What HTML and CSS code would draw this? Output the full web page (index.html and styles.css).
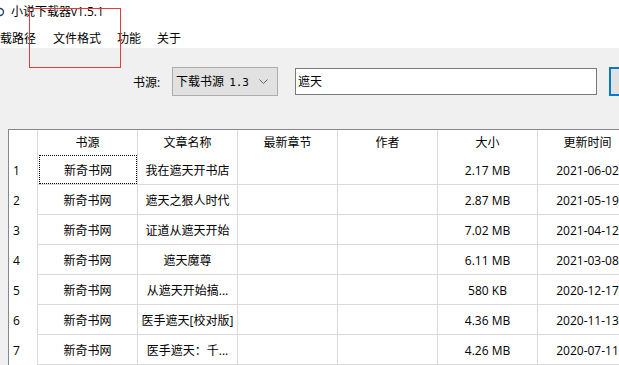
FILE: index.html
```html
<!DOCTYPE html>
<html lang="zh">
<head>
<meta charset="utf-8">
<title>小说下载器v1.5.1</title>
<link rel="stylesheet" href="styles.css">
</head>
<body>
<div class="window">
  <div class="titlebar">
    <svg class="app-icon" width="6" height="10" viewBox="0 0 6 10"><path d="M0 1.5 A3.5 3.5 0 0 1 0 8.5" fill="none" stroke="#23406e" stroke-width="1.4"/></svg>
    <span class="title">小说下载器v1.5.1</span>
  </div>
  <div class="menubar">
    <span class="menu-item first">载路径</span>
    <span class="menu-item">文件格式</span>
    <span class="menu-item">功能</span>
    <span class="menu-item">关于</span>
  </div>
  <div class="toolbar">
    <span class="label">书源:</span>
    <div class="combo">
      <span class="combo-text">下载书源 <span class="ver">1.3</span></span>
      <svg class="chev" width="9" height="5" viewBox="0 0 9 5"><path d="M0.5 0.5 L4.5 4.5 L8.5 0.5" fill="none" stroke="#606060" stroke-width="1"/></svg>
    </div>
    <div class="input">遮天</div>
    <div class="button"></div>
  </div>
  <div class="grid">
    <div class="row head">
      <div class="rh"></div>
      <div class="c">书源</div>
      <div class="c">文章名称</div>
      <div class="c">最新章节</div>
      <div class="c">作者</div>
      <div class="c">大小</div>
      <div class="c">更新时间</div>
    </div>
    <div class="row">
      <div class="rh">1</div>
      <div class="c focus-cell"><div class="focus">新奇书网</div></div>
      <div class="c">我在遮天开书店</div>
      <div class="c"></div>
      <div class="c"></div>
      <div class="c">2.17 MB</div>
      <div class="c">2021-06-02</div>
    </div>
    <div class="row">
      <div class="rh">2</div>
      <div class="c">新奇书网</div>
      <div class="c">遮天之狠人时代</div>
      <div class="c"></div>
      <div class="c"></div>
      <div class="c">2.87 MB</div>
      <div class="c">2021-05-19</div>
    </div>
    <div class="row">
      <div class="rh">3</div>
      <div class="c">新奇书网</div>
      <div class="c">证道从遮天开始</div>
      <div class="c"></div>
      <div class="c"></div>
      <div class="c">7.02 MB</div>
      <div class="c">2021-04-12</div>
    </div>
    <div class="row">
      <div class="rh">4</div>
      <div class="c">新奇书网</div>
      <div class="c">遮天魔尊</div>
      <div class="c"></div>
      <div class="c"></div>
      <div class="c">6.11 MB</div>
      <div class="c">2021-03-08</div>
    </div>
    <div class="row">
      <div class="rh">5</div>
      <div class="c">新奇书网</div>
      <div class="c">从遮天开始搞...</div>
      <div class="c"></div>
      <div class="c"></div>
      <div class="c">580 KB</div>
      <div class="c">2020-12-17</div>
    </div>
    <div class="row">
      <div class="rh">6</div>
      <div class="c">新奇书网</div>
      <div class="c">医手遮天[校对版]</div>
      <div class="c"></div>
      <div class="c"></div>
      <div class="c">4.36 MB</div>
      <div class="c">2020-11-13</div>
    </div>
    <div class="row">
      <div class="rh">7</div>
      <div class="c">新奇书网</div>
      <div class="c">医手遮天：千...</div>
      <div class="c"></div>
      <div class="c"></div>
      <div class="c">4.26 MB</div>
      <div class="c">2020-07-11</div>
    </div>
  </div>
  <div class="annot"></div>
</div>
</body>
</html>
```

FILE: styles.css
```css
* { box-sizing: border-box; }
html, body {
  margin: 0;
  padding: 0;
}
body {
  width: 619px;
  height: 365px;
  overflow: hidden;
  background: #f0f0f0;
  font-family: "Open Sans", "Noto Sans CJK SC", sans-serif;
  font-size: 12px;
  color: #000;
}
.window {
  position: relative;
  width: 619px;
  height: 365px;
  overflow: hidden;
}
.titlebar {
  height: 22px;
  background: #fff;
  display: flex;
  align-items: center;
  line-height: 16px;
  padding-top: 1px;
}
.app-icon {
  flex: none;
}
.title {
  margin-left: 5px;
}
.menubar {
  height: 26px;
  background: #fff;
  display: flex;
  align-items: flex-end;
  padding-bottom: 1px;
  line-height: 16px;
}
.menu-item {
  padding: 0 8px;
  flex: none;
}
.menu-item.first {
  padding: 0 9px 0 0;
}
.toolbar {
  height: 81px;
  display: flex;
  align-items: flex-start;
  padding-top: 19px;
  padding-left: 133px;
}
.toolbar > * {
  flex: none;
}
.label {
  width: 39px;
  height: 29px;
  line-height: 29px;
  padding-top: 1px;
}
.combo {
  width: 106px;
  height: 29px;
  background: #e1e1e1;
  border: 1px solid #adadad;
  display: flex;
  align-items: center;
  padding-left: 3px;
  line-height: 16px;
}
.combo-text {
  flex: 1;
  white-space: nowrap;
  padding-top: 1px;
}
.ver {
  font-family: "DejaVu Sans Mono", monospace;
  font-size: 11px;
  margin-left: 2px;
}
.chev {
  flex: none;
  margin-right: 9px;
}
.input {
  margin-left: 17px;
  margin-top: 1px;
  width: 302px;
  height: 27px;
  background: #fff;
  border: 1px solid #7a7a7a;
  padding-left: 2px;
  padding-top: 1px;
  line-height: 24px;
}
.button {
  margin-left: 12px;
  width: 60px;
  height: 29px;
  background: #e1e1e1;
  border: 2px solid #0078d7;
}
.grid {
  margin-left: 8px;
  width: 640px;
  height: 240px;
  background: #fff;
  border-left: 1px solid #828790;
  border-top: 1px solid #828790;
}
.row {
  display: grid;
  grid-template-columns: 28px repeat(6, 100px);
  height: 30px;
}
.row.head {
  height: 25px;
}
.c {
  border-left: 1px solid #dadada;
  border-bottom: 1px solid #dadada;
  display: flex;
  align-items: center;
  justify-content: center;
  white-space: nowrap;
  overflow: hidden;
  line-height: 16px;
  padding-top: 2px;
}
.head .c {
  border-bottom: none;
  padding-top: 1px;
  padding-bottom: 0;
}
.rh {
  display: flex;
  align-items: center;
  padding-left: 4px;
  line-height: 16px;
  padding-top: 2px;
}
.focus-cell {
  padding: 0 0 0 1px;
  align-items: stretch;
}
.focus {
  flex: 1;
  border: 1px dotted #000;
  display: flex;
  align-items: center;
  justify-content: center;
  padding-top: 2px;
}
.annot {
  position: absolute;
  left: 29px;
  top: 8px;
  width: 92px;
  height: 60px;
  border: 1px solid #e83a3a;
  pointer-events: none;
}
```
